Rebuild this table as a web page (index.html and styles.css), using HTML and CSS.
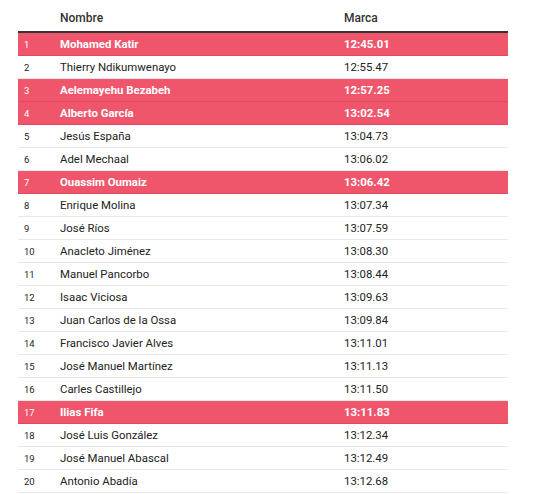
FILE: index.html
```html
<!DOCTYPE html>
<html lang="es">
<head>
<meta charset="utf-8">
<link rel="stylesheet" href="styles.css">
</head>
<body>
<table class="ranking">
  <thead>
    <tr><th class="pos"></th><th class="name">Nombre</th><th class="mark">Marca</th></tr>
  </thead>
  <tbody>
    <tr class="hl"><td class="pos">1</td><td class="name">Mohamed Katir</td><td class="mark">12:45.01</td></tr>
    <tr><td class="pos">2</td><td class="name">Thierry Ndikumwenayo</td><td class="mark">12:55.47</td></tr>
    <tr class="hl"><td class="pos">3</td><td class="name">Aelemayehu Bezabeh</td><td class="mark">12:57.25</td></tr>
    <tr class="hl"><td class="pos">4</td><td class="name">Alberto García</td><td class="mark">13:02.54</td></tr>
    <tr><td class="pos">5</td><td class="name">Jesús España</td><td class="mark">13:04.73</td></tr>
    <tr><td class="pos">6</td><td class="name">Adel Mechaal</td><td class="mark">13:06.02</td></tr>
    <tr class="hl"><td class="pos">7</td><td class="name">Ouassim Oumaiz</td><td class="mark">13:06.42</td></tr>
    <tr><td class="pos">8</td><td class="name">Enrique Molina</td><td class="mark">13:07.34</td></tr>
    <tr><td class="pos">9</td><td class="name">José Ríos</td><td class="mark">13:07.59</td></tr>
    <tr><td class="pos">10</td><td class="name">Anacleto Jiménez</td><td class="mark">13:08.30</td></tr>
    <tr><td class="pos">11</td><td class="name">Manuel Pancorbo</td><td class="mark">13:08.44</td></tr>
    <tr><td class="pos">12</td><td class="name">Isaac Viciosa</td><td class="mark">13:09.63</td></tr>
    <tr><td class="pos">13</td><td class="name">Juan Carlos de la Ossa</td><td class="mark">13:09.84</td></tr>
    <tr><td class="pos">14</td><td class="name">Francisco Javier Alves</td><td class="mark">13:11.01</td></tr>
    <tr><td class="pos">15</td><td class="name">José Manuel Martínez</td><td class="mark">13:11.13</td></tr>
    <tr><td class="pos">16</td><td class="name">Carles Castillejo</td><td class="mark">13:11.50</td></tr>
    <tr class="hl"><td class="pos">17</td><td class="name">Ilias Fifa</td><td class="mark">13:11.83</td></tr>
    <tr><td class="pos">18</td><td class="name">José Luis González</td><td class="mark">13:12.34</td></tr>
    <tr><td class="pos">19</td><td class="name">José Manuel Abascal</td><td class="mark">13:12.49</td></tr>
    <tr><td class="pos">20</td><td class="name">Antonio Abadía</td><td class="mark">13:12.68</td></tr>
  </tbody>
</table>
</body>
</html>
```
FILE: styles.css
```css
body {
  margin: 8px;
  background: #ffffff;
  font-family: Roboto, "Liberation Sans", sans-serif;
  color: #222;
}
.ranking {
  border-collapse: collapse;
  width: 490px;
  margin-left: 10px;
  table-layout: fixed;
}
.ranking th {
  height: 19px;
  padding: 0 6px 4px;
  text-align: left;
  font-size: 12px;
  font-weight: 500;
  color: #333;
  border-bottom: 2px solid #333;
  vertical-align: middle;
}
.ranking th.pos { width: 24px; }
.ranking th.mark { width: 158px; }
.ranking td {
  height: 22px;
  padding: 0 6px;
  font-size: 11.4px;
  color: #222;
  border-bottom: 1px solid #e8e8e8;
  vertical-align: middle;
  white-space: nowrap;
}
.ranking td.pos {
  font-size: 9.5px;
}
.ranking tr.hl td {
  background: #f0566b;
  color: #fff;
  font-weight: 700;
  border-bottom-color: #e24a5f;
}
.ranking tr.hl td.pos {
  font-weight: 400;
}
```
